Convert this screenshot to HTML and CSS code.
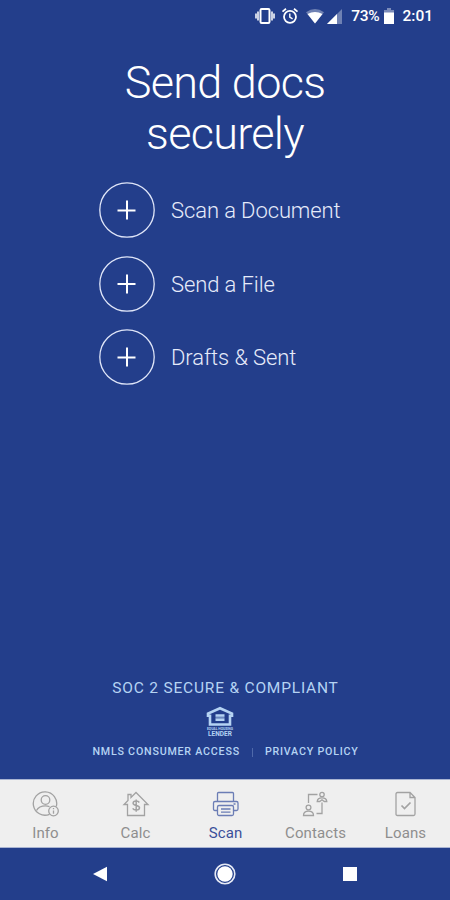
FILE: index.html
```html
<!DOCTYPE html>
<html lang="en">
<head>
    <meta charset="UTF-8">
    <meta name="viewport" content="width=device-width, initial-scale=1.0">
    <title>Send docs securely</title>
    <link rel="stylesheet" href="styles.css">
</head>
<body>

<div class="screen">
    <div class="status">
        <svg class="vibrate" width="20" height="18" viewBox="0 0 20 18">
            <rect x="5.5" y="2" width="9" height="14" rx="1.2" fill="none" stroke="#fff" stroke-width="2"/>
            <path d="M3 4.5v9M1 6.5v5M17 4.5v9M19 6.5v5" stroke="#fff" stroke-width="1.8" opacity=".85"/>
        </svg>
        <svg class="alarm" width="18" height="18" viewBox="0 0 18 18" fill="none" stroke="#fff">
            <circle cx="9" cy="9.8" r="6" stroke-width="1.8"/>
            <path d="M1.5 4.6L5 1.8M16.5 4.6L13 1.8" stroke-width="1.8"/>
            <path d="M8.8 6.5v3.6l2.8 1.7" stroke-width="1.4"/>
        </svg>
        <svg class="wifi" width="18" height="16" viewBox="0 0 18 16">
            <path d="M0 4.2Q9-2.4 18 4.2L9 15.5z" fill="#fff" opacity=".35"/>
            <path d="M1.5 6Q9 1.8 16.5 6L9 15.5z" fill="#fff"/>
        </svg>
        <svg class="signal" width="15" height="15" viewBox="0 0 15 15">
            <path d="M15 0v15H0z" fill="#fff" opacity=".35"/>
            <path d="M10 5v10H0z" fill="#fff"/>
        </svg>
        <span class="percent">73%</span>
        <svg class="battery" width="10" height="16" viewBox="0 0 10 16">
            <path d="M3 0h4v2h3v4H0V2h3z" fill="#fff" opacity=".4"/>
            <path d="M0 4.5h10V16H0z" fill="#fff"/>
        </svg>
        <span class="time">2:01</span>
    </div>

    <h1>Send docs<br>securely</h1>

    <div class="actions">
        <div class="action">
            <svg class="plus" width="56" height="56" viewBox="0 0 56 56">
                <circle cx="28" cy="28" r="27.2"/>
                <path d="M28 18.5v19M18.5 28.5h18"/>
            </svg>
            <span>Scan a Document</span>
        </div>
        <div class="action">
            <svg class="plus" width="56" height="56" viewBox="0 0 56 56">
                <circle cx="28" cy="28" r="27.2"/>
                <path d="M28 18.5v19M18.5 28h18"/>
            </svg>
            <span>Send a File</span>
        </div>
        <div class="action">
            <svg class="plus" width="56" height="56" viewBox="0 0 56 56">
                <circle cx="28" cy="28" r="27.2"/>
                <path d="M28 18.5v19M18.5 28.5h18"/>
            </svg>
            <span>Drafts &amp; Sent</span>
        </div>
    </div>

    <div class="legal">
        <div class="soc">SOC 2 SECURE &amp; COMPLIANT</div>
        <div class="lender">
            <svg width="28" height="21" viewBox="0 0 28 21">
                <path d="M14 2.2L2 7.5v2.3h2v8.7h20V9.800h2V7.5z" fill="none" stroke="#b5d3f3" stroke-width="2.6"/>
                <path d="M9.5 9.5h9M9.5 13.8h9" stroke="#b5d3f3" stroke-width="2.6"/>
                <path d="M9.5 11.7h9" stroke="#b5d3f3" stroke-width="2" opacity=".5"/>
            </svg>
            <span class="lender-top">EQUAL HOUSING</span>
            <span class="lender-bottom">LENDER</span>
        </div>
        <div class="links">
            <span>NMLS CONSUMER ACCESS</span>
            <span class="divider"></span>
            <span>PRIVACY POLICY</span>
        </div>
    </div>

    <div class="tabs">
        <div class="tab">
            <svg width="28" height="28" viewBox="0 0 28 28">
                <path d="M24.3 16.5A11.7 11.7 0 1 0 17.5 24.3"/>
                <circle cx="13.5" cy="10" r="4.3"/>
                <path d="M4.5 20.5c1.8-3.4 5-4.6 9-4.6 1.5 0 2.8.3 4 .8"/>
                <circle cx="21.5" cy="21" r="4.8"/>
                <path d="M21.5 20.5v3.2M21.5 18v1.2"/>
            </svg>
            <span>Info</span>
        </div>
        <div class="tab">
            <svg width="28" height="28" viewBox="0 0 28 28">
                <path d="M5.5 25.5v-11H2l4-4v-6h3v3l5-5 12 12h-3.5v11z"/>
                <path d="M17.3 12.5c-.6-1-1.800-1.400-3.200-1.400-1.800 0-3 .8-3 2.200 0 3.200 6.400 1.300 6.400 4.500 0 1.500-1.400 2.300-3.300 2.300-1.600 0-2.900-.6-3.500-1.700M14.2 9.5v12.200" stroke-width="1.5"/>
            </svg>
            <span>Calc</span>
        </div>
        <div class="tab active">
            <svg width="28" height="28" viewBox="0 0 28 28">
                <path d="M5.5 11.5v-8q0-1 1-1h14q1 0 1 1v8"/>
                <path d="M5.5 20.5H3q-1.500 0-1.500-1.500v-6q0-1.500 1.500-1.500h21.500q1.500 0 1.500 1.500v6q0 1.500-1.500 1.500h-3"/>
                <rect x="5.5" y="15.5" width="16" height="10" rx="1.5"/>
                <path d="M9 19h9.500M9 22.200h9.500M21.500 14h2"/>
            </svg>
            <span>Scan</span>
        </div>
        <div class="tab">
            <svg width="28" height="28" viewBox="0 0 28 28">
                <path d="M6.5 13V4.500h9M20 12.500v11h-5.500"/>
                <circle cx="6.5" cy="17.5" r="2.4"/>
                <path d="M1.5 25.500c0-3 1.800-4.300 5-4.300s5 1.300 5 4.300z"/>
                <circle cx="20" cy="4.5" r="2.200"/>
                <path d="M15.2 11.500c.2-2.600 1.800-3.600 4.800-3.600s4.600 1 4.800 3.600h-2.500L20 9.800l-2.300 1.700z"/>
            </svg>
            <span>Contacts</span>
        </div>
        <div class="tab">
            <svg width="28" height="28" viewBox="0 0 28 28">
                <path d="M5.5 2.500H18l5 5v16.500q0 1.500-1.500 1.500h-16q-1.500 0-1.500-1.500V4q0-1.500 1.500-1.500M18 2.500v5h5"/>
                <path d="M9.5 15.500l3 3 6-6" stroke-width="1.7"/>
            </svg>
            <span>Loans</span>
        </div>
    </div>

    <div class="navbar">
        <svg width="24" height="24" viewBox="0 0 24 24">
            <path d="M5 12l14-7.200v14.400z" fill="#fff"/>
        </svg>
        <svg width="24" height="24" viewBox="0 0 24 24">
            <circle cx="12" cy="12" r="9.800" fill="none" stroke="#e6eaf5" stroke-width="1.6"/>
            <circle cx="12" cy="12" r="7.700" fill="#fff"/>
        </svg>
        <svg width="24" height="24" viewBox="0 0 24 24">
            <path d="M5 5h14v14H5z" fill="#fff"/>
        </svg>
    </div>
</div>

</body>
</html>
```

FILE: styles.css
```css
body {
    margin: 0;
    font-family: Roboto, sans-serif;
    background-color: #233e8b;
    color: #fff;
}
.screen {
    display: flex;
    flex-direction: column;
    width: 450px;
    height: 900px;
    background-color: #233e8b;
    overflow: hidden;
}
.status {
    display: flex;
    align-items: center;
    justify-content: flex-end;
    height: 32px;
    padding-right: 17px;
    font-size: 15.5px;
    font-weight: 500;
}
.alarm {
    margin-left: 6px;
}
.wifi {
    margin-left: 7px;
}
.signal {
    margin-left: 3px;
}
.percent {
    margin-left: 9px;
    letter-spacing: -0.3px;
}
.battery {
    margin-left: 5px;
    margin-right: 8px;
}
h1 {
    margin: 25px 0 0;
    font-size: 45px;
    font-weight: 300;
    line-height: 51px;
    letter-spacing: -0.7px;
    text-align: center;
}
.actions {
    display: flex;
    flex-direction: column;
    gap: 17.5px;
    margin: 23px 0 0 99px;
}
.action {
    display: flex;
    align-items: center;
    gap: 16px;
    height: 56px;
    font-size: 22px;
    font-weight: 300;
    letter-spacing: -0.1px;
    color: #e6ebfa;
}
.action span {
    padding-top: 1px;
}
.plus {
    fill: none;
    stroke: #dfe5f8;
    stroke-width: 1.3;
}
.plus path {
    stroke: #fff;
    stroke-width: 2;
}
.legal {
    display: flex;
    flex-direction: column;
    align-items: center;
    margin-top: auto;
    padding-bottom: 20px;
    color: #b5d3f3;
}
.soc {
    padding-left: 1px;
    font-size: 15.5px;
    line-height: 20px;
    letter-spacing: 0.8px;
}
.lender {
    display: flex;
    flex-direction: column;
    align-items: center;
    width: 28px;
    height: 32px;
    margin: 8px 10px 0 0;
    font-weight: 700;
}
.lender-top {
    font-size: 3.4px;
    line-height: 4px;
    white-space: nowrap;
}
.lender-bottom {
    font-size: 6.5px;
    line-height: 6px;
}
.links {
    display: flex;
    align-items: center;
    margin-top: 7px;
    padding-left: 1px;
    font-size: 10.7px;
    font-weight: 500;
    line-height: 14px;
    letter-spacing: 0.78px;
}
.divider {
    width: 1px;
    height: 9px;
    margin: 0 12px;
    background-color: #4f69aa;
}
.tabs {
    display: flex;
    box-sizing: border-box;
    height: 69px;
    border-top: 1px solid #a9b4d2;
    border-bottom: 1px solid #a9b4d2;
    background-color: #efefef;
}
.tab {
    display: flex;
    flex: 1;
    flex-direction: column;
    align-items: center;
    padding: 10px 0 0 1px;
    font-size: 15px;
    line-height: 18px;
    letter-spacing: 0.1px;
    color: #8e8e8e;
}
.tab span {
    margin-top: 6px;
}
.tab svg {
    fill: none;
    stroke: #a2a2a2;
    stroke-width: 1.3;
}
.active {
    color: #3b509a;
}
.tab.active svg {
    stroke: #6b7db5;
}
.navbar {
    display: flex;
    align-items: center;
    justify-content: space-between;
    height: 52px;
    padding: 0 88px;
}
```
